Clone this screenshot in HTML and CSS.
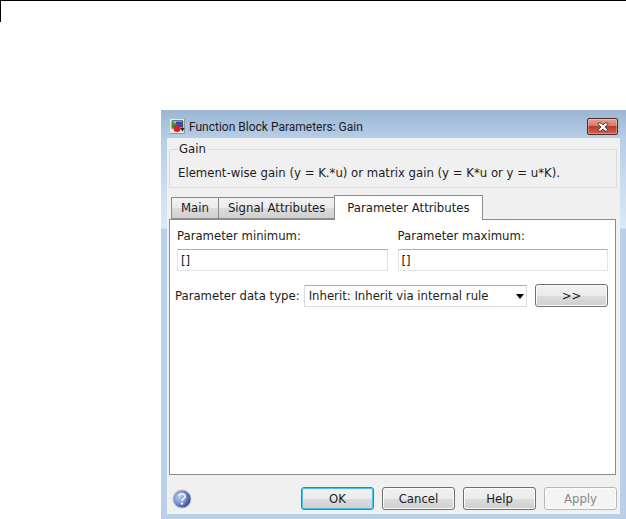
FILE: index.html
```html
<!DOCTYPE html>
<html lang="en">
<head>
  <meta charset="UTF-8" />
  <meta name="viewport" content="width=device-width, initial-scale=1" />
  <title>Function Block Parameters: Gain</title>
  <link rel="stylesheet" href="styles.css">
</head>
<body>
  <div class="page-rule"></div>

  <main class="dialog">
    <header class="titlebar">
      <svg class="app-icon" viewBox="0 0 16 16" aria-hidden="true">
        <rect width="16" height="16" fill="#ece9e4"/>
        <path d="M0 15.500H15.500V0" fill="none" stroke="#8d8d8d"/>
        <path d="M2 2h11.500v8" fill="none" stroke="#222"/>
        <rect x="6" y="3" width="7" height="6" fill="#2b49c8"/>
        <path d="M1.500 2v9l7-4.500z" fill="#16a53a"/>
        <circle cx="7.500" cy="10" r="3.800" fill="#e31b23"/>
        <path d="M11 9.500h4.500l-2.200 4z" fill="#222"/>
      </svg>
      <h1>Function Block Parameters: Gain</h1>
      <button type="button" class="close" aria-label="Close">
        <svg viewBox="0 0 12 10" width="12" height="10" aria-hidden="true">
          <path d="M1 1h3l2 2 2-2h3v1L8 5l3 3v1H8L6 7 4 9H1V8l3-3-3-3z" fill="#fff" stroke="#63434a" stroke-width="1"/>
        </svg>
      </button>
    </header>

    <form class="content">
      <fieldset class="description">
        <legend>Gain</legend>
        <p>Element-wise gain (y = K.*u) or matrix gain (y = K*u or y = u*K).</p>
      </fieldset>

      <div class="tabs" role="tablist">
        <button type="button" role="tab" class="tab">Main</button>
        <button type="button" role="tab" class="tab">Signal Attributes</button>
        <button type="button" role="tab" class="tab active" aria-selected="true">Parameter Attributes</button>
      </div>

      <section class="panel" role="tabpanel">
        <div class="range">
          <div class="field">
            <label for="paramMin">Parameter minimum:</label>
            <input type="text" id="paramMin" value="[]">
          </div>
          <div class="field">
            <label for="paramMax">Parameter maximum:</label>
            <input type="text" id="paramMax" value="[]">
          </div>
        </div>
        <div class="type-row">
          <label for="dataType">Parameter data type:</label>
          <div class="select-wrap">
            <select id="dataType">
              <option>Inherit: Inherit via internal rule</option>
            </select>
            <svg class="arrow" viewBox="0 0 8 5" aria-hidden="true"><path d="M0 0h8L4 5z"/></svg>
          </div>
          <button type="button" class="btn more">&gt;&gt;</button>
        </div>
      </section>

      <footer class="actions">
        <button type="button" class="help-icon" aria-label="Help">
          <svg viewBox="0 0 20 20" width="20" height="20" aria-hidden="true">
            <defs>
              <radialGradient id="ball" cx="0.35" cy="0.4" r="0.7">
                <stop offset="0" stop-color="#b9c9ee"/>
                <stop offset="0.5" stop-color="#7d95d0"/>
                <stop offset="1" stop-color="#26388a"/>
              </radialGradient>
            </defs>
            <circle cx="10" cy="10" r="9" fill="url(#ball)" stroke="#b9bcc8"/>
            <path d="M7 7.500c0-3.500 6-3.500 6 0 0 2.200-3 2.200-3 4.500" fill="none" stroke="#e8eefb" stroke-width="2"/>
            <circle cx="10" cy="14.500" r="1.200" fill="#e8eefb"/>
          </svg>
        </button>
        <button type="button" class="btn default">OK</button>
        <button type="button" class="btn">Cancel</button>
        <button type="button" class="btn">Help</button>
        <button type="button" class="btn" disabled>Apply</button>
      </footer>
    </form>
  </main>
</body>
</html>
```
FILE: styles.css
```css
* {
  box-sizing: border-box;
}

body {
  margin: 0;
  background: #fff;
  color: #1c1c1c;
  font-family: "DejaVu Sans Condensed", "Noto Sans", sans-serif;
  font-size: 13px;
  line-height: 16px;
}

button, input, select {
  font: inherit;
  color: inherit;
  margin: 0;
}

.page-rule {
  height: 22px;
  border-top: 1px solid #000;
  border-left: 1px solid #000;
}

.dialog {
  margin: 88px 0 0 161px;
  padding: 0 6px 6px;
  background: linear-gradient(#9ab6d3, #b7cde8 28px, #dbe9f7 118px, #b8d0ea 119px, #b8d0ea);
}

.titlebar {
  display: flex;
  align-items: center;
  height: 28px;
  padding: 5px 2px 0 3px;
}

.app-icon {
  width: 15px;
  height: 15px;
  margin-right: 4px;
}

.titlebar h1 {
  flex: 1;
  margin: 0;
  font-family: Roboto, "Noto Sans", sans-serif;
  font-size: 12px;
  font-weight: normal;
}

.close {
  display: flex;
  align-items: center;
  justify-content: center;
  width: 31px;
  height: 17px;
  padding: 0;
  border: 1px solid #54282b;
  border-radius: 2px;
  background: linear-gradient(#e4a294, #d4756a 48%, #b93b2c 50%, #d4634c);
  box-shadow: inset 0 0 0 1px rgba(255, 255, 255, 0.3);
}

.content {
  padding: 3px 3px 4px 2px;
  background: #f0f0f0;
}

.description {
  margin: 0;
  padding: 8px 8px 6px;
  border: 1px solid #dcdcdc;
}

.description legend {
  padding: 0 1px;
}

.description p {
  margin: 0;
}

.tabs {
  display: flex;
  align-items: flex-end;
  height: 31px;
  padding: 0 2px;
}

.tab {
  height: 22px;
  padding: 0 9px;
  border: 1px solid #8c8c8c;
  border-right: 0;
  background: linear-gradient(#f2f2f2, #ebebeb 50%, #dcdcdc 51%, #d0d0d0);
}

.tab.active {
  position: relative;
  height: 25px;
  padding: 0 12px;
  margin-bottom: -1px;
  border-right: 1px solid #8c8c8c;
  border-bottom: 0;
  background: #fff;
}

.panel {
  min-height: 256px;
  margin-right: 1px;
  padding: 8px 7px 8px 5px;
  border: 1px solid #8c8c8c;
  background: #fff;
}

.range {
  display: flex;
  gap: 10px;
  padding-left: 2px;
}

.field {
  flex: 1;
  min-width: 0;
}

.field label {
  display: block;
}

.field input {
  width: 100%;
  height: 22px;
  margin-top: 5px;
  padding: 0 3px;
  border: 1px solid #dfe3e8;
  border-top-color: #abadb3;
}

.type-row {
  display: flex;
  align-items: center;
  margin-top: 13px;
}

.select-wrap {
  flex: 1;
  position: relative;
  margin: 0 8px 0 4px;
}

select {
  display: block;
  width: 100%;
  height: 22px;
  padding: 0 20px 0 4px;
  border: 1px solid #d9dce0;
  border-top-color: #abadb3;
  background: #fff;
  appearance: none;
}

.arrow {
  position: absolute;
  top: 9px;
  right: 3px;
  width: 8px;
  height: 5px;
  pointer-events: none;
}

.btn {
  width: 73px;
  height: 23px;
  padding: 0;
  border: 1px solid #707070;
  border-radius: 3px;
  background: linear-gradient(#f2f2f2, #ebebeb 50%, #dddddd 51%, #cfcfcf);
  box-shadow: inset 0 0 0 1px #fafafa;
}

.btn.default {
  border-color: #3c7fb1;
  box-shadow: inset 0 0 0 1px #48c4ea;
}

.btn:disabled {
  border-color: #b4b8ba;
  background: #f4f4f4;
  color: #8a8a8a;
}

.actions {
  display: flex;
  align-items: center;
  gap: 8px;
  margin-top: 12px;
}

.help-icon {
  width: 20px;
  height: 20px;
  margin: 0 auto 0 3px;
  padding: 0;
  border: 0;
  background: none;
}

.help-icon svg {
  display: block;
}
```
